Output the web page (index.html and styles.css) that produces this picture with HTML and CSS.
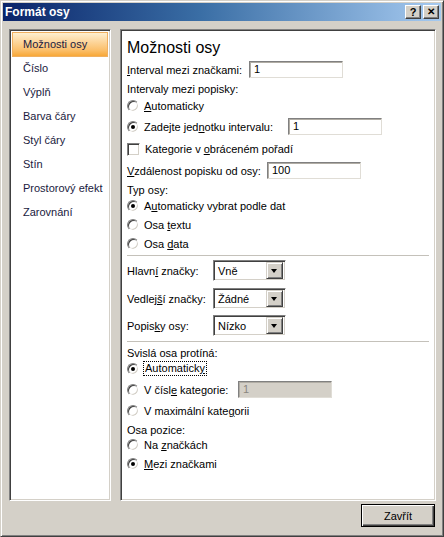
FILE: index.html
```html
<!DOCTYPE html>
<html lang="cs">
<head>
<meta charset="utf-8">
<title>Formát osy</title>
<link rel="stylesheet" href="styles.css">
</head>
<body>
<div class="window">
  <div class="titlebar">
    <span class="title">Formát osy</span>
    <div class="tbuttons">
      <span class="tbtn">?</span>
      <span class="tbtn tclose">✕</span>
    </div>
  </div>
  <div class="main">
    <div class="nav">
      <div class="nav-item selected">Možnosti osy</div>
      <div class="nav-item">Číslo</div>
      <div class="nav-item">Výplň</div>
      <div class="nav-item">Barva čáry</div>
      <div class="nav-item">Styl čáry</div>
      <div class="nav-item">Stín</div>
      <div class="nav-item">Prostorový efekt</div>
      <div class="nav-item">Zarovnání</div>
    </div>
    <div class="panel">
      <div class="heading">Možnosti osy</div>

      <div class="row r-input mt4">
        <span class="lbl w122"><span><u>I</u>nterval mezi značkami:</span></span>
        <span class="field">1</span>
      </div>
      <div class="row mt3"><span>Intervaly mezi popisky:</span></div>
      <div class="row mt1"><span class="radio"></span><span><u>A</u>utomaticky</span></div>
      <div class="row r-input mt4">
        <span class="lbl w161"><span class="radio checked"></span><span>Zadejte jed<u>n</u>otku intervalu:</span></span>
        <span class="field">1</span>
      </div>
      <div class="row mt6"><span class="check"></span><span>Kategorie v <u>o</u>bráceném pořadí</span></div>
      <div class="row r-input mt5">
        <span class="lbl w140"><span><u>V</u>zdálenost popisku od osy:</span></span>
        <span class="field">100</span>
      </div>
      <div class="row mt3"><span>Typ osy:</span></div>
      <div class="row"><span class="radio checked"></span><span>A<u>u</u>tomaticky vybrat podle dat</span></div>
      <div class="row mt3"><span class="radio"></span><span>Osa <u>t</u>extu</span></div>
      <div class="row mt3"><span class="radio"></span><span>Osa <u>d</u>ata</span></div>

      <div class="sep mt3"></div>

      <div class="row r-select mt4">
        <span class="lbl w86"><span>Hlavn<u>í</u> značky:</span></span>
        <span class="select"><span class="sel-text">Vně</span><span class="sel-btn"></span></span>
      </div>
      <div class="row r-select mt7">
        <span class="lbl w86"><span>Vedlej<u>š</u>í značky:</span></span>
        <span class="select"><span class="sel-text">Žádné</span><span class="sel-btn"></span></span>
      </div>
      <div class="row r-select mt6">
        <span class="lbl w86"><span>Popis<u>k</u>y osy:</span></span>
        <span class="select"><span class="sel-text">Nízko</span><span class="sel-btn"></span></span>
      </div>

      <div class="sep mt5"></div>

      <div class="row mt3"><span>Svislá osa protíná:</span></div>
      <div class="row h15"><span class="radio checked"></span><span class="focus">Automatick<u>y</u></span></div>
      <div class="row r-input mt5">
        <span class="lbl w111"><span class="radio"></span><span>V čísl<u>e</u> kategorie:</span></span>
        <span class="field disabled">1</span>
      </div>
      <div class="row mt5"><span class="radio"></span><span>V maximální kate<u>g</u>orii</span></div>
      <div class="row mt3 h15"><span>Osa pozice:</span></div>
      <div class="row"><span class="radio"></span><span>Na <u>z</u>načkách</span></div>
      <div class="row mt3"><span class="radio checked"></span><span><u>M</u>ezi značkami</span></div>
    </div>
  </div>
  <div class="footer">
    <span class="button">Zavřít</span>
  </div>
</div>
</body>
</html>
```
FILE: styles.css
```css
* { box-sizing: border-box; }
html, body { margin: 0; padding: 0; }
body {
  width: 444px;
  height: 537px;
  overflow: hidden;
  background: #d4d0c8;
  font-family: "Liberation Sans", Arial, sans-serif;
  font-size: 11px;
  color: #000;
}
u { text-decoration: underline; text-underline-offset: 1px; }

.window {
  width: 444px;
  height: 537px;
  border: 1px solid;
  border-color: #d4d0c8 #404040 #404040 #d4d0c8;
  box-shadow: inset 1px 1px #ffffff, inset -1px -1px #808080;
  padding: 2px;
  display: flex;
  flex-direction: column;
  background: #d4d0c8;
}

.titlebar {
  height: 18px;
  background: linear-gradient(to right, #0a246a 0%, #3a6ea5 45%, #a6caf0 100%);
  display: flex;
  align-items: center;
  justify-content: space-between;
  padding: 0 2px 0 2px;
}
.title {
  color: #fff;
  font-weight: bold;
  font-size: 12px;
}
.tbuttons { display: flex; gap: 2px; }
.tbtn {
  width: 16px;
  height: 14px;
  background: #d4d0c8;
  border: 1px solid;
  border-color: #fff #404040 #404040 #fff;
  box-shadow: inset -1px -1px #808080;
  font-weight: bold;
  font-size: 11px;
  line-height: 12px;
  text-align: center;
  color: #000;
}
.tclose { font-size: 10px; }

.main {
  display: flex;
  margin-top: 8px;
  height: 472px;
}

.nav, .panel {
  background: #fff;
  border: 1px solid;
  border-color: #808080 #ffffff #ffffff #808080;
  box-shadow: inset 1px 1px #404040, inset -1px -1px #d4d0c8;
}
.nav {
  margin-left: 6px;
  width: 102px;
  padding: 2px;
}
.nav-item {
  height: 24px;
  line-height: 23px;
  padding-left: 11px;
  color: #1a1a40;
  white-space: nowrap;
}
.nav-item.selected {
  height: 25px;
  border: 1px solid #f0b060;
  padding-left: 10px;
  background: linear-gradient(to bottom, #fff0d0 0%, #fdd8a0 35%, #fbbf6a 75%, #f8a838 100%);
}

.panel {
  margin-left: 9px;
  width: 316px;
  padding: 8px 6px 0 6px;
}
.heading {
  font-size: 16px;
  line-height: 19px;
  height: 19px;
}

.row {
  display: flex;
  align-items: center;
  height: 16px;
  white-space: nowrap;
}
.h15 { height: 15px; }
.r-input { height: 17px; }
.r-select { height: 21px; }
.mt1 { margin-top: 1px; }
.mt3 { margin-top: 3px; }
.mt4 { margin-top: 4px; }
.mt5 { margin-top: 5px; }
.mt6 { margin-top: 6px; }
.mt7 { margin-top: 7px; }

.lbl { display: flex; align-items: center; flex: none; }
.w86 { width: 86px; }
.w111 { width: 111px; }
.w122 { width: 122px; }
.w140 { width: 140px; }
.w161 { width: 161px; }

.field {
  width: 94px;
  height: 17px;
  border: 1px solid;
  border-color: #808080 #e0ddd6 #e0ddd6 #808080;
  box-shadow: inset 1px 1px #b0aca4;
  background: #fff;
  padding-left: 4px;
  line-height: 15px;
}
.field.disabled {
  background: #d4d0c8;
  color: #8a8780;
}

.radio {
  flex: none;
  width: 12px;
  height: 12px;
  border-radius: 50%;
  border: 1px solid;
  border-color: #808080 #ffffff #ffffff #808080;
  box-shadow: inset 1px 1px #404040, inset -1px -1px #d4d0c8;
  background: #fff;
  margin-right: 5px;
  position: relative;
}
.radio.checked::after {
  content: "";
  position: absolute;
  left: 3px;
  top: 3px;
  width: 4px;
  height: 4px;
  border-radius: 50%;
  background: #000;
}
.check {
  flex: none;
  width: 13px;
  height: 13px;
  border: 1px solid;
  border-color: #808080 #ffffff #ffffff #808080;
  box-shadow: inset 1px 1px #404040, inset -1px -1px #d4d0c8;
  background: #fff;
  margin-right: 5px;
}
.focus {
  outline: 1px dotted #000;
  outline-offset: 0;
  padding: 0 1px;
  line-height: 13px;
}

.sep {
  height: 1px;
  background: #c4c1ba;
}

.select {
  width: 73px;
  height: 21px;
  border: 1px solid;
  border-color: #808080 #ffffff #ffffff #808080;
  box-shadow: inset 1px 1px #404040, inset -1px -1px #d4d0c8;
  background: #fff;
  display: flex;
  align-items: center;
  padding: 2px;
}
.sel-text { flex: 1; padding-left: 2px; }
.sel-btn {
  width: 17px;
  height: 17px;
  background: #d4d0c8;
  border: 1px solid;
  border-color: #d4d0c8 #404040 #404040 #d4d0c8;
  box-shadow: inset 1px 1px #fff, inset -1px -1px #808080;
  position: relative;
}
.sel-btn::after {
  content: "";
  position: absolute;
  left: 4px;
  top: 6px;
  border-left: 3.5px solid transparent;
  border-right: 3.5px solid transparent;
  border-top: 4px solid #000;
}

.footer {
  display: flex;
  justify-content: flex-end;
  padding-right: 6px;
  padding-top: 3px;
}
.button {
  width: 74px;
  height: 23px;
  border: 1px solid #000;
  box-shadow: inset 1px 1px #fff, inset -1px -1px #404040, inset -2px -2px #808080;
  background: #d4d0c8;
  display: flex;
  align-items: center;
  justify-content: center;
}
```
